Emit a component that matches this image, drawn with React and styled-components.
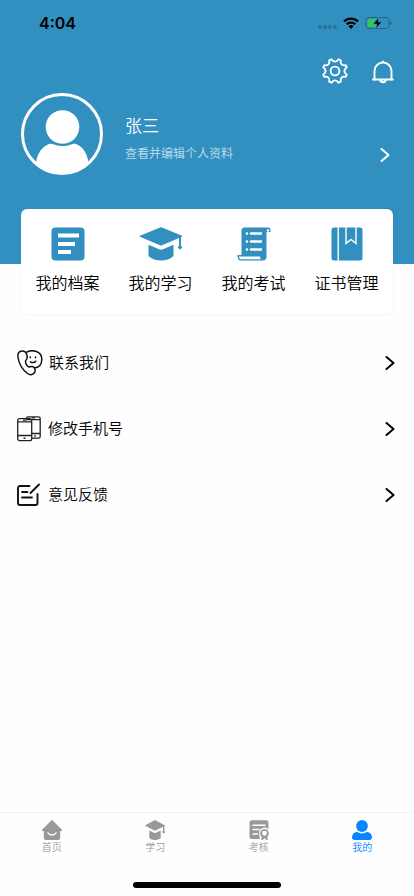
import React from "react";
import styled, { createGlobalStyle } from "styled-components";

const BLUE = "#3190c0";

const menus = [
  { label: "我的档案", icon: <FileIcon /> },
  { label: "我的学习", icon: <CapIcon /> },
  { label: "我的考试", icon: <ExamIcon /> },
  { label: "证书管理", icon: <BookIcon /> },
];

const rows = [
  { label: "联系我们", icon: <ContactIcon /> },
  { label: "修改手机号", icon: <PhonesIcon /> },
  { label: "意见反馈", icon: <FeedbackIcon /> },
];

const tabs = [
  { label: "首页", icon: <HomeIcon /> },
  { label: "学习", icon: <StudyIcon /> },
  { label: "考核", icon: <AssessIcon /> },
  { label: "我的", icon: <UserIcon />, active: true },
];

function App() {
  return (
    <>
      <GlobalStyle />
      <Page>
        <Header>
          <StatusBar>
            <Time>4:04</Time>
            <StatusIcons>
              <SignalIcon />
              <WifiIcon />
              <BatteryIcon />
            </StatusIcons>
          </StatusBar>
          <Actions>
            <IconButton aria-label="设置">
              <GearIcon />
            </IconButton>
            <IconButton aria-label="消息">
              <BellIcon />
            </IconButton>
          </Actions>
          <Profile>
            <AvatarIcon />
            <ProfileText>
              <h1>张三</h1>
              <p>查看并编辑个人资料</p>
            </ProfileText>
            <Chevron />
          </Profile>
        </Header>
        <Card>
          {menus.map((menu) => (
            <MenuButton key={menu.label}>
              {menu.icon}
              <span>{menu.label}</span>
            </MenuButton>
          ))}
        </Card>
        <List>
          {rows.map((row) => (
            <Row key={row.label}>
              {row.icon}
              <span>{row.label}</span>
              <Chevron />
            </Row>
          ))}
        </List>
        <TabBar>
          {tabs.map((tab) => (
            <Tab key={tab.label} $active={tab.active}>
              {tab.icon}
              <span>{tab.label}</span>
            </Tab>
          ))}
        </TabBar>
        <HomeIndicator />
      </Page>
    </>
  );
}

function SignalIcon() {
  return (
    <svg width="20" height="14" viewBox="0 0 20 14" fill="#2b7095">
      <circle cx="3" cy="11" r="1.900" />
      <circle cx="8" cy="11" r="1.900" />
      <circle cx="13" cy="11" r="1.900" />
      <circle cx="18" cy="11" r="1.900" />
    </svg>
  );
}

function WifiIcon() {
  return (
    <svg width="16" height="12" viewBox="0 0 16 12">
      <g fill="none" stroke="#000" strokeWidth="2.300">
        <path d="M1 4.500a10 10 0 0 1 14 0" />
        <path d="M3.700 7.300a6.100 6.100 0 0 1 8.600 0" />
      </g>
      <path d="M8 12 5.400 9.300a3.700 3.700 0 0 1 5.200 0z" />
    </svg>
  );
}

function BatteryIcon() {
  return (
    <svg width="27" height="14" viewBox="0 0 27 14">
      <rect x="1" y="1.500" width="23" height="11" rx="3" fill="none" stroke="#236788" />
      <path d="M25.300 5v4c1.200-.5 1.500-1 1.500-2s-.3-1.500-1.500-2z" fill="#236788" />
      <rect x="2.500" y="3" width="10" height="8" rx="1.500" fill="#35c759" />
      <path d="M14 1 8 8h3.800L10.500 13 17 5.800h-4z" fill="#000" stroke={BLUE} strokeWidth="0.800" />
    </svg>
  );
}

function GearIcon() {
  return (
    <svg width="26" height="26" viewBox="0 0 26 26" fill="none" stroke="#fff" strokeWidth="1.900" strokeLinejoin="round">
      <path d="M16.500 1.300 18.800 2.300C17.900 5.700 20.300 8.100 23.700 7.200L24.700 9.500C21.600 11.300 21.600 14.700 24.700 16.500L23.700 18.800C20.300 17.900 17.900 20.300 18.800 23.700L16.500 24.700C14.700 21.600 11.300 21.600 9.500 24.700L7.200 23.700C8.100 20.300 5.700 17.900 2.300 18.800L1.300 16.500C4.400 14.700 4.400 11.300 1.300 9.500L2.300 7.200C5.700 8.100 8.100 5.700 7.200 2.300L9.500 1.300C11.300 4.400 14.700 4.400 16.500 1.300z" />
      <circle cx="13" cy="13" r="4.400" />
    </svg>
  );
}

function BellIcon() {
  return (
    <svg width="22" height="26" viewBox="0 0 22 26" fill="none" stroke="#fff" strokeWidth="1.900" strokeLinecap="round">
      <path d="M2.500 21.500V13a8.500 8.500 0 0 1 17 0v8.500" />
      <path d="M1 21.500h20M11 4v-.5M8.200 22c.5 2.900 5.100 2.900 5.600 0" />
    </svg>
  );
}

function AvatarIcon() {
  return (
    <svg width="82" height="82" viewBox="0 0 82 82" fill="#fff">
      <circle cx="41" cy="41" r="39.500" fill="none" stroke="#fff" strokeWidth="3" />
      <circle cx="41.500" cy="34" r="16.800" />
      <path d="M15 70c1-9 6-16.500 13-19 2-.7 3-.2 5 .6 5.500 2 11.500 2 17 0 2-.8 3-1.300 5-.6 7 2.500 11.500 10 12.500 19a39.500 39.500 0 0 1-52.500 0z" />
    </svg>
  );
}

function Chevron() {
  return (
    <svg width="10" height="16" viewBox="0 0 10 16" fill="none" stroke="currentColor" strokeWidth="2" strokeLinecap="round" strokeLinejoin="round">
      <path d="M1.500 2 8.500 8l-7 6" />
    </svg>
  );
}

function FileIcon() {
  return (
    <svg width="34" height="34" viewBox="0 0 34 34" fill={BLUE}>
      <rect x="0.500" y="0.500" width="33" height="33" rx="4" />
      <path d="M7 6.500h21v4H7zM7 15h17v4H7zM7 23h13v4H7z" fill="#fff" />
    </svg>
  );
}

function CapIcon() {
  return (
    <svg width="44" height="34" viewBox="0 0 44 34" fill={BLUE}>
      <path d="M21 .5c.7-.2 1.300-.2 2 0l20 8.300c.5.300.5.600 0 .9L23 18.300c-.7.300-1.300.3-2 0L1 9.700c-.5-.3-.5-.6 0-.9z" />
      <path d="M9.500 17.800 20 22.300c1.300.5 2.700.5 4 0l10.500-4.500V29c-6 6-19 6-25 0z" />
      <path d="M40 10h2v8.500l1.200 2-2.200 2.300-2.200-2.300 1.200-2z" />
    </svg>
  );
}

function ExamIcon() {
  return (
    <svg width="34" height="34" viewBox="0 0 34 34">
      <path d="M4.500 28V3.500c0-2 1-3 3-3H31a2.500 2.500 0 0 1 2.500 2.500v2h-4v25c0 2-1.500 3.500-3.500 3.500H3.500C1.500 33.500.5 31.500.5 28z" fill={BLUE} />
      <path d="M2 29.500h21c0 1.500.5 2 1 2.700H4c-1.300 0-2-1.200-2-2.700z" fill="#fff" />
      <circle cx="31" cy="3.500" r="1.300" fill="#fff" />
      <g stroke="#fff" strokeWidth="2.400" strokeLinecap="round">
        <path d="M14 6.500h10M14 14.500h10M14 22.500h10M9.900 6.500h.2M9.900 14.500h.2M9.900 22.500h.2" />
      </g>
    </svg>
  );
}

function BookIcon() {
  return (
    <svg width="32" height="34" viewBox="0 0 32 34">
      <rect x="0.500" y="0.500" width="31" height="33" rx="2.500" fill={BLUE} />
      <path d="M7.200 0v34M15 0v16.500l5-4 5 4V0" fill="none" stroke="#fff" strokeWidth="1.400" />
    </svg>
  );
}

function ContactIcon() {
  return (
    <svg width="26" height="26" viewBox="0 0 26 26" fill="none" stroke="#111" strokeWidth="1.500" strokeLinecap="round" strokeLinejoin="round">
      <path d="M8.500 11C11.500 8 10.500 1 5 1 1.500 1 .5 4 1 7.500c1 6.500 5 12.500 9.500 16 4 3 8.500-.5 7.500-4.500-1-3-4-3-6-2-2-1-3.500-3.500-3.500-6z" />
      <path d="M9 2.500C14-1 24.500.5 24.800 9c.2 5.500-3 8.700-7.300 8.700M13.300 7v.8M18.500 7v.8M13.500 11.800c1.700 1.300 4 1 5.200-.6" />
    </svg>
  );
}

function PhonesIcon() {
  return (
    <svg width="25" height="26" viewBox="0 0 25 26" fill="none" stroke="#222" strokeWidth="1.300">
      <path d="M9.500 3V2.500C9.500 1.500 10.200.8 11 .8h10.500c1 0 1.700.7 1.700 1.700v18c0 1-.7 1.700-1.700 1.700H15M9.500 3.700h13.700M15 17.500h8.200" />
      <rect x="0.700" y="2.700" width="14" height="22" rx="2" />
      <path d="M.7 5.800h14M.7 19.500h14M6 4.200h3.500M15 1.900h3" />
      <path d="M7.500 21.500v1.500M18 19.200v1.400" strokeWidth="1.800" />
    </svg>
  );
}

function FeedbackIcon() {
  return (
    <svg width="25" height="24" viewBox="0 0 25 24" fill="none" stroke="#111" strokeWidth="1.900" strokeLinecap="round" strokeLinejoin="round">
      <path d="M12.500 3H3C1.800 3 1 3.800 1 5v15c0 1.200.8 2 2 2h15.500c1.200 0 2-.8 2-2v-9M5 9h5.500M5 14.500h10M13.500 10l8.500-8.500" />
    </svg>
  );
}

function HomeIcon() {
  return (
    <svg width="20" height="20" viewBox="0 0 20 20" fill="currentColor">
      <path d="M9.300.4c.5-.4.900-.4 1.400 0l9 9c.7.700.3 1.600-.7 1.600h-.8v7c0 1.200-.8 2-2 2H3.800c-1.200 0-2-.8-2-2v-7H1c-1 0-1.400-.9-.7-1.600z" />
      <path d="M6 13c1.500 2.800 6.500 2.800 8 0" fill="none" stroke="#fff" strokeWidth="1.500" strokeLinecap="round" />
    </svg>
  );
}

function StudyIcon() {
  return (
    <svg width="20" height="20" viewBox="0 0 20 20" fill="currentColor">
      <path d="M9.500.2c.4-.2.700-.2 1 0l9.200 5c.4.200.4.500 0 .7l-9.200 4.500c-.3.200-.7.200-1 0L.4 6c-.5-.2-.5-.6 0-.8z" />
      <path d="M4.300 10.500 9 12.800c.7.300 1.300.3 2 0l4.700-2.300V18c-3 2.700-8.400 2.700-11.400 0z" />
      <path d="M18 6h1.400v5a1.200 1.200 0 1 1-1.400 0z" />
    </svg>
  );
}

function AssessIcon() {
  return (
    <svg width="20" height="20" viewBox="0 0 20 20" fill="currentColor">
      <rect x="0.500" y="0.200" width="19" height="18.800" rx="2.500" />
      <path d="M4 5.200h12M4 9.500h6M4 14h4.500" stroke="#fff" strokeWidth="1.500" strokeLinecap="round" />
      <path d="M10.200 14A5.500 5.500 0 0 1 20 9.800V20h-9z" fill="#fff" />
      <circle cx="15.500" cy="13.300" r="3.400" fill="none" stroke="currentColor" strokeWidth="1.900" />
      <path d="m13 16-1 4 2.300-.5 1.200-1.500 1.200 1.500 2.300.5-1-4z" />
    </svg>
  );
}

function UserIcon() {
  return (
    <svg width="20" height="20" viewBox="0 0 20 20" fill="currentColor">
      <circle cx="10" cy="6" r="5.900" />
      <path d="M0 17.500c0-3 1.800-5 4.200-5.500 1-.2 1.500.2 2.300.6 2.200 1.200 4.800 1.200 7 0 .8-.4 1.300-.8 2.300-.6 2.400.5 4.200 2.500 4.200 5.500 0 1.500-1 2.500-2.500 2.500h-15C1 20 0 19 0 17.500z" />
    </svg>
  );
}

const GlobalStyle = createGlobalStyle`
  * {
    box-sizing: border-box;
  }
  body {
    margin: 0;
    background: #fefefe;
    color: #000;
    font-family: "Noto Sans CJK SC", sans-serif;
    font-weight: 350;
  }
  h1, p {
    margin: 0;
    font-weight: inherit;
  }
  button {
    border: 0;
    padding: 0;
    background: none;
    color: inherit;
    font-family: inherit;
    font-weight: inherit;
  }
  svg {
    display: block;
    flex-shrink: 0;
  }
`;

const Page = styled.div`
  display: flex;
  flex-direction: column;
  min-height: 100vh;
`;

const Header = styled.header`
  height: 264px;
  background: ${BLUE};
  color: #fff;
`;

const StatusBar = styled.div`
  display: flex;
  align-items: center;
  justify-content: space-between;
  height: 46px;
  padding: 0 22px 0 39px;
  color: #000;
`;

const Time = styled.span`
  font-family: Inter, sans-serif;
  font-size: 16px;
  font-weight: 600;
`;

const StatusIcons = styled.div`
  display: flex;
  align-items: center;
  gap: 6px;
`;

const Actions = styled.div`
  display: flex;
  justify-content: flex-end;
  gap: 24px;
  padding: 12px 20px 0;
`;

const IconButton = styled.button`
  display: block;
`;

const Profile = styled.div`
  display: flex;
  align-items: center;
  gap: 22px;
  padding: 9px 24px 0 21px;
  > svg:last-child {
    margin-top: 42px;
  }
`;

const ProfileText = styled.div`
  flex: 1;
  padding-top: 10px;
  h1 {
    font-size: 17px;
    line-height: 28px;
  }
  p {
    font-size: 12px;
    line-height: 28px;
    color: #c4dfee;
  }
`;

const Card = styled.nav`
  display: grid;
  grid-template-columns: repeat(4, 1fr);
  height: 105px;
  margin: -55px 21px 0;
  padding-top: 18px;
  border-radius: 6px;
  background: #fff;
  box-shadow: 0 0 2px rgba(0, 0, 0, 0.12);
`;

const MenuButton = styled.button`
  display: flex;
  flex-direction: column;
  align-items: center;
  gap: 9px;
  font-size: 16px;
  line-height: 24px;
`;

const List = styled.div`
  flex: 1;
  padding-top: 16px;
`;

const Row = styled.button`
  display: flex;
  align-items: center;
  gap: 6px;
  width: 100%;
  height: 66px;
  padding: 0 19px 0 17px;
  font-size: 15px;
  text-align: left;
  span {
    flex: 1;
    padding-bottom: 3px;
  }
`;

const TabBar = styled.nav`
  display: grid;
  grid-template-columns: repeat(4, 1fr);
  height: 70px;
  padding-top: 7px;
  border-top: 1px solid #f2f2f2;
`;

const Tab = styled.button`
  display: flex;
  flex-direction: column;
  align-items: center;
  color: ${(props) => (props.$active ? "#0785ff" : "#999")};
  font-size: 10px;
  line-height: 14px;
`;

const HomeIndicator = styled.div`
  width: 148px;
  height: 6px;
  margin: 0 auto 8px;
  border-radius: 3px;
  background: #000;
`;

export default App;
